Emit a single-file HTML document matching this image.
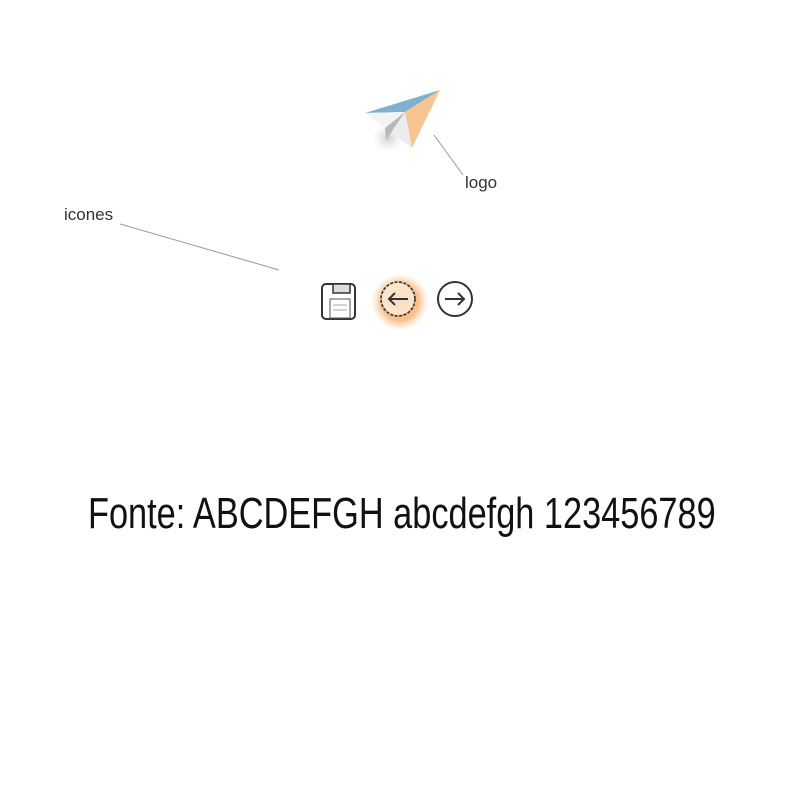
<!DOCTYPE html>
<html><head><meta charset="utf-8"><style>
html,body{margin:0;padding:0;background:#fff;width:800px;height:800px;overflow:hidden;position:relative;font-family:"Liberation Sans",sans-serif}
.lbl{position:absolute;font-size:17px;color:#333}
.font{position:absolute;left:88px;top:486px;font-size:44px;line-height:56px;color:#111;white-space:nowrap;transform-origin:0 0;transform:scaleX(0.78)}
</style></head><body>
<svg width="800" height="800" style="position:absolute;left:0;top:0">
<defs>
<radialGradient id="gl" cx="50%" cy="50%" r="50%">
<stop offset="0" stop-color="#f5a860" stop-opacity="0.95"/>
<stop offset="0.65" stop-color="#f7b77e" stop-opacity="0.85"/>
<stop offset="1" stop-color="#fbd9b8" stop-opacity="0"/>
</radialGradient>
<radialGradient id="sh" cx="50%" cy="50%" r="50%">
<stop offset="0" stop-color="#bbb" stop-opacity="0.7"/>
<stop offset="1" stop-color="#ddd" stop-opacity="0"/>
</radialGradient>
</defs>
<ellipse cx="388" cy="138" rx="16" ry="14" fill="url(#sh)"/>
<polygon points="365,113 440,90 405,112" fill="#7fb0d0"/>
<polygon points="365,113 405,112 385,128" fill="#f3f3f3"/>
<polygon points="405,112 440,90 412,148" fill="#f6c591"/>
<polygon points="385,128 405,112 412,148" fill="#ececec"/>
<polygon points="385,128 405,112 386,140" fill="#b8b8b8"/>
<line x1="434" y1="135" x2="463" y2="175" stroke="#999" stroke-width="1"/>
<line x1="120" y1="224" x2="279" y2="270" stroke="#999" stroke-width="1"/>
<rect x="322" y="284" width="33" height="35" rx="4" fill="none" stroke="#333" stroke-width="2"/>
<rect x="333" y="284" width="17" height="9" fill="#ddd" stroke="#333" stroke-width="1.5"/>
<rect x="330" y="299" width="20" height="19" fill="#fff" stroke="#555" stroke-width="1"/>
<line x1="333" y1="305" x2="347" y2="305" stroke="#aaa"/>
<line x1="333" y1="310" x2="347" y2="310" stroke="#aaa"/>
<circle cx="400" cy="302" r="29" fill="url(#gl)"/>
<circle cx="398" cy="299" r="16" fill="#fff" opacity="0.6"/>
<circle cx="398" cy="299" r="17" fill="none" stroke="#333" stroke-width="1.6" stroke-dasharray="3 1.5"/>
<path d="M408 299 H389 M395 293 L389 299 L395 305" fill="none" stroke="#333" stroke-width="2"/>
<circle cx="455" cy="299" r="17" fill="none" stroke="#333" stroke-width="2"/>
<path d="M445 299 H464 M458 293 L464 299 L458 305" fill="none" stroke="#333" stroke-width="2"/>
</svg>
<div class="lbl" style="left:465px;top:173px">logo</div>
<div class="lbl" style="left:64px;top:205px">icones</div>
<div class="font">Fonte: ABCDEFGH abcdefgh 123456789</div>
</body></html>
